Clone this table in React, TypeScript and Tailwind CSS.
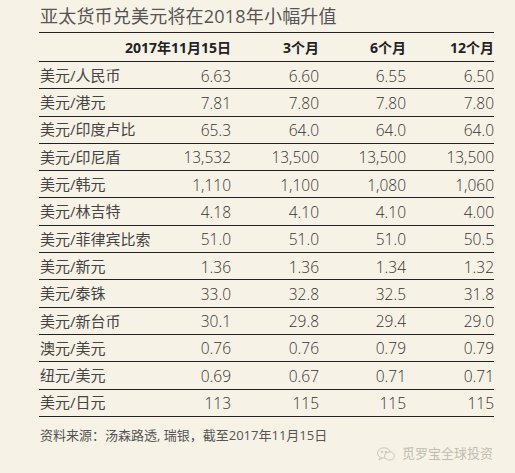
import React from 'react';

const rows: [string, string, string, string, string][] = [
  ['美元/人民币', '6.63', '6.60', '6.55', '6.50'],
  ['美元/港元', '7.81', '7.80', '7.80', '7.80'],
  ['美元/印度卢比', '65.3', '64.0', '64.0', '64.0'],
  ['美元/印尼盾', '13,532', '13,500', '13,500', '13,500'],
  ['美元/韩元', '1,110', '1,100', '1,080', '1,060'],
  ['美元/林吉特', '4.18', '4.10', '4.10', '4.00'],
  ['美元/菲律宾比索', '51.0', '51.0', '51.0', '50.5'],
  ['美元/新元', '1.36', '1.36', '1.34', '1.32'],
  ['美元/泰铢', '33.0', '32.8', '32.5', '31.8'],
  ['美元/新台币', '30.1', '29.8', '29.4', '29.0'],
  ['澳元/美元', '0.76', '0.76', '0.79', '0.79'],
  ['纽元/美元', '0.69', '0.67', '0.71', '0.71'],
  ['美元/日元', '113', '115', '115', '115'],
];

const cols = 'grid grid-cols-[105px_87px_88px_87px_88px]';

const App: React.FC = () => {
  return (
    <div
      className="w-[515px] h-[473px] bg-[#f7f2e6] text-[#3a3a3a] overflow-hidden"
      style={{ fontFamily: '"Open Sans", "Noto Sans CJK SC", sans-serif' }}
    >
      <div className="pl-[39px] pt-[3px] w-[494px]">
        <h1 className="text-[18px] leading-[27px] text-[#555] pl-[1px] tracking-[0.2px] whitespace-nowrap">亚太货币兑美元将在2018年小幅升值</h1>

        <div className="mt-[2px] border-t-[1.5px] border-[#222]">
          <div className={`${cols} h-[29px] items-center border-b-[1.5px] border-[#222] text-[14px] font-bold text-[#222] whitespace-nowrap`}>
            <div />
            <div className="flex justify-end pt-[1px]">2017年11月15日</div>
            <div className="flex justify-end pt-[1px]">3个月</div>
            <div className="flex justify-end pt-[1px]">6个月</div>
            <div className="flex justify-end pt-[1px]">12个月</div>
          </div>

          {rows.map((r) => (
            <div key={r[0]} className={`${cols} h-[27.3px] items-center border-b-[1.5px] border-[#222] text-[15px] whitespace-nowrap`}>
              <div className="pl-[1px] text-[#444]">{r[0]}</div>
              {r.slice(1).map((v, i) => (
                <div key={i} className="flex justify-end text-[15.5px] font-light text-[#333] pt-[2px]">{v}</div>
              ))}
            </div>
          ))}
        </div>

        <p className="mt-[9px] pl-[1px] text-[13px] text-[#555] whitespace-nowrap">资料来源：汤森路透, 瑞银，截至2017年11月15日</p>

        <div className="flex justify-end items-center gap-[6px] -mt-[1px] pr-[1px] text-[13px] text-[#c2bdb3] whitespace-nowrap">
          <svg width="20" height="16" viewBox="0 0 20 16" fill="none" stroke="#cbc6bc" strokeWidth="1">
            <ellipse cx="8" cy="7" rx="6.5" ry="5.2" />
            <path d="M4 11.5 L3 14 L6.5 12" />
            <ellipse cx="13.5" cy="10" rx="5" ry="4" fill="#f7f2e6" />
            <circle cx="6" cy="6" r="0.8" fill="#cbc6bc" />
            <circle cx="10" cy="6" r="0.8" fill="#cbc6bc" />
          </svg>
          <span>觅罗宝全球投资</span>
        </div>
      </div>
    </div>
  );
};

export default App;
